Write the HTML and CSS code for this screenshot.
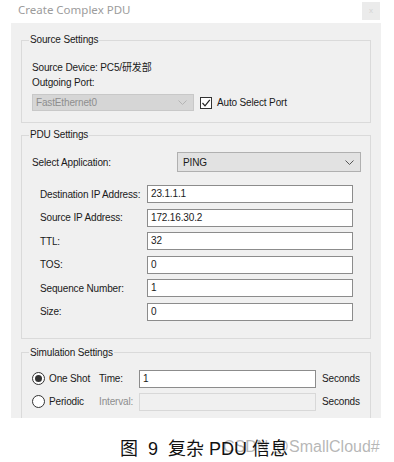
FILE: index.html
```html
<!DOCTYPE html>
<html>
<head>
<meta charset="utf-8">
<link rel="stylesheet" href="styles.css">
</head>
<body>
<div class="titlebar">
  <span class="title">Create Complex PDU</span>
  <span class="close">x</span>
</div>
<div class="panel">
  <fieldset class="group src">
    <legend>Source Settings</legend>
    <div class="line first">Source Device: PC5/研发部</div>
    <div class="line">Outgoing Port:</div>
    <div class="port-row">
      <div class="combo disabled">
        <span>FastEthernet0</span>
        <svg class="chev" width="9" height="5" viewBox="0 0 9 5"><polyline points="0.5,0.5 4.5,4.5 8.5,0.5" fill="none" stroke="#b4b4b4" stroke-width="1"/></svg>
      </div>
      <span class="checkbox"><svg width="10" height="10" viewBox="0 0 10 10"><polyline points="1.5,5 4,7.8 8.8,1.8" fill="none" stroke="#222" stroke-width="1.2"/></svg></span>
      <span class="check-label">Auto Select Port</span>
    </div>
  </fieldset>

  <fieldset class="group pdu">
    <legend>PDU Settings</legend>
    <div class="app-row">
      <span>Select Application:</span>
      <div class="combo app">
        <span>PING</span>
        <svg class="chev" width="9" height="5" viewBox="0 0 9 5"><polyline points="0.5,0.5 4.5,4.5 8.5,0.5" fill="none" stroke="#555" stroke-width="1"/></svg>
      </div>
    </div>
    <div class="fields">
      <span>Destination IP Address:</span><div class="input">23.1.1.1</div>
      <span>Source IP Address:</span><div class="input">172.16.30.2</div>
      <span>TTL:</span><div class="input">32</div>
      <span>TOS:</span><div class="input">0</div>
      <span>Sequence Number:</span><div class="input">1</div>
      <span>Size:</span><div class="input">0</div>
    </div>
  </fieldset>

  <fieldset class="group sim">
    <legend>Simulation Settings</legend>
    <div class="sim-grid">
      <span class="radio-cell"><span class="radio on"></span>One Shot</span>
      <span>Time:</span>
      <div class="input">1</div>
      <span class="secs">Seconds</span>
      <span class="radio-cell"><span class="radio"></span>Periodic</span>
      <span class="muted">Interval:</span>
      <div class="input off"></div>
      <span class="secs">Seconds</span>
    </div>
  </fieldset>
</div>
<div class="caption">
  <span class="cap-text">图&nbsp; 9&nbsp; 复杂 PDU 信息</span>
  <span class="watermark">CSDN @SmallCloud#</span>
</div>
</body>
</html>
```

FILE: styles.css
```css
html, body {
  margin: 0;
  padding: 0;
  background: #ffffff;
}
body {
  width: 394px;
  height: 462px;
  overflow: hidden;
  font-family: "Liberation Sans", "Noto Sans CJK SC", sans-serif;
  font-size: 10px;
  letter-spacing: -0.15px;
  color: #1a1a1a;
}
.titlebar {
  height: 23px;
  display: flex;
  align-items: flex-start;
  justify-content: space-between;
}
.title {
  margin-left: 18px;
  margin-top: 2px;
  font-family: "Noto Sans", "Liberation Sans", sans-serif;
  font-size: 11.5px;
  letter-spacing: 0;
  line-height: 16px;
  color: #9c9c9c;
}
.close {
  width: 18px;
  height: 18px;
  margin-top: 2px;
  margin-right: 14px;
  background: #ebebeb;
  color: #d4d4d4;
  font-size: 8px;
  line-height: 18px;
  text-align: center;
}
.panel {
  margin-left: 11px;
  width: 370px;
  height: 395px;
  box-sizing: border-box;
  padding: 10px 10px 0 10px;
  background: #f0f0f0;
  overflow: hidden;
}
.group {
  margin: 0;
  padding: 0 9px 11px 10px;
  border: 1px solid #dadada;
  min-width: 0;
}
.group legend {
  padding: 0 1px;
  margin-left: -3px;
  line-height: 14px;
  font-size: 10px;
  color: #1a1a1a;
}
.line {
  line-height: 15px;
}
.line.first {
  margin-top: 13px;
}
.port-row {
  margin-top: 4px;
  display: flex;
  align-items: center;
  height: 17px;
}
.combo {
  box-sizing: border-box;
  display: flex;
  align-items: center;
  justify-content: space-between;
  padding: 0 6px 0 3px;
}
.combo.disabled {
  width: 162px;
  height: 17px;
  background: #d6d6d6;
  border: 1px solid #c8c8c8;
  color: #8e8e8e;
}
.combo.app {
  width: 184px;
  height: 20px;
  background: #e2e2e2;
  border: 1px solid #b0b0b0;
  padding-left: 5px;
  padding-right: 6px;
}
.checkbox {
  margin-left: 6px;
  width: 12px;
  height: 12px;
  box-sizing: border-box;
  border: 1px solid #333;
  background: #fff;
  display: flex;
  align-items: center;
  justify-content: center;
}
.check-label {
  margin-left: 5px;
}
.pdu { margin-top: 5px; padding-bottom: 17px; }
.app-row {
  margin-top: 10px;
  display: grid;
  grid-template-columns: 145px 184px;
  align-items: center;
  height: 20px;
}
.fields {
  margin-top: 13px;
  padding-left: 8px;
  display: grid;
  grid-template-columns: 107px 206px;
  grid-auto-rows: 18px;
  row-gap: 5.6px;
  align-items: center;
}
.input {
  box-sizing: border-box;
  height: 18px;
  background: #fff;
  border: 1px solid #8c8c8c;
  padding-left: 3px;
  line-height: 16px;
}
.input.off {
  background: #f0f0f0;
  border-color: #d8d8d8;
}
.sim { margin-top: 7px; }
.sim-grid {
  margin-top: 10px;
  display: grid;
  grid-template-columns: 67px 40px 177px auto;
  grid-auto-rows: 18px;
  row-gap: 5px;
  align-items: center;
}
.radio-cell {
  display: flex;
  align-items: center;
}
.radio {
  width: 13px;
  height: 13px;
  box-sizing: border-box;
  border: 1px solid #333;
  border-radius: 50%;
  background: #fff;
  margin-right: 4px;
  display: flex;
  align-items: center;
  justify-content: center;
}
.radio.on::after {
  content: "";
  width: 7px;
  height: 7px;
  border-radius: 50%;
  background: #333;
}
.muted { color: #8e8e8e; }
.secs { margin-left: 6px; }
.caption {
  position: relative;
  margin-top: 19px;
  height: 24px;
}
.cap-text {
  position: relative;
  z-index: 2;
  display: block;
  padding-left: 120px;
  font-size: 18px;
  letter-spacing: 0;
  line-height: 24px;
  color: #111;
}
.watermark {
  position: absolute;
  z-index: 1;
  left: 223px;
  top: 0;
  font-size: 16px;
  letter-spacing: 0;
  line-height: 20px;
  color: rgba(170, 170, 170, 0.85);
}
```
